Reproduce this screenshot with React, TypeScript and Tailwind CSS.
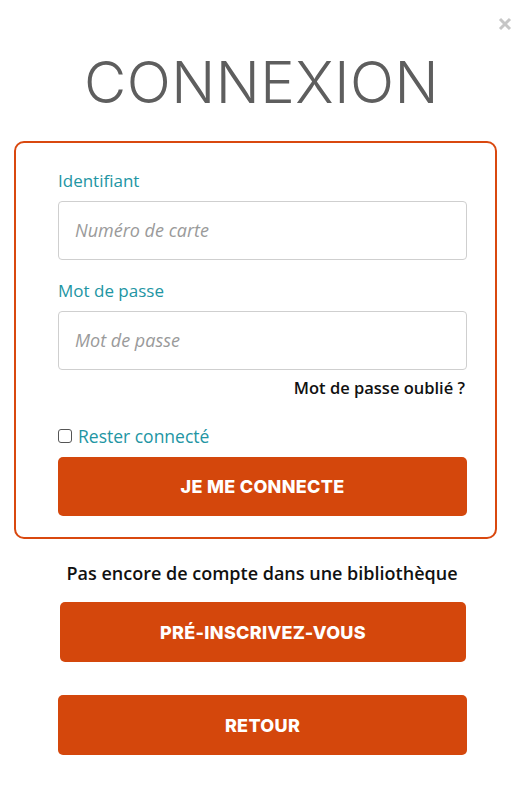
import React from "react";

export default function App() {
  return (
    <div className="relative w-[523px] h-[792px] bg-white overflow-hidden" style={{ fontFamily: '"Open Sans", "Liberation Sans", sans-serif' }}>
      <svg className="absolute left-[498px] top-[17px]" width="14" height="14" viewBox="0 0 14 14">
        <path d="M2 2 L12 12 M12 2 L2 12" stroke="#c6c6c6" strokeWidth="3" strokeLinecap="butt" />
      </svg>
      <h1 className="pt-[52px] h-[141px] text-center text-[58px] leading-[60px] text-[#5e5e5e] tracking-[0.5px]" style={{ fontFamily: 'Inter, "Open Sans", sans-serif', fontWeight: 300 }}>
        CONNEXION
      </h1>
      <div className="ml-[14px] w-[483px] h-[398px] border-2 border-[#d9480f] rounded-[10px] pl-[42px] pr-[28px] pt-[27px]">
        <label className="block text-[17px] leading-[22px] text-[#2295a3]">Identifiant</label>
        <div className="mt-[9px] h-[59px] border border-[#cfcfcf] rounded-[4px] flex items-center pl-[16px] text-[18px] italic text-[#9a9a9a]">Numéro de carte</div>
        <label className="block mt-[20px] text-[17px] leading-[22px] text-[#2295a3]">Mot de passe</label>
        <div className="mt-[9px] h-[59px] border border-[#cfcfcf] rounded-[4px] flex items-center pl-[16px] text-[18px] italic text-[#9a9a9a]">Mot de passe</div>
        <div className="mt-[7px] text-right pr-[2px] text-[16.5px] leading-[22px] font-semibold text-[#111]">Mot de passe oublié ?</div>
        <div className="mt-[26px] flex items-center gap-[6px]">
          <span className="inline-block w-[14px] h-[14px] border border-[#555] rounded-[3px] bg-white"></span>
          <span className="text-[17.5px] leading-[22px] text-[#2295a3]">Rester connecté</span>
        </div>
        <button className="mt-[10px] w-full h-[59px] rounded-[5px] bg-[#d4470c] text-white text-[18px] font-extrabold tracking-[0.3px]" style={{ fontFamily: 'Inter, "Open Sans", sans-serif' }}>JE ME CONNECTE</button>
      </div>
      <p className="mt-[23px] ml-[30px] w-[464px] text-center text-[18px] leading-[22px] font-semibold text-[#111]">Pas encore de compte dans une bibliothèque</p>
      <button className="block mt-[18px] ml-[60px] w-[406px] h-[60px] rounded-[5px] bg-[#d4470c] text-white text-[18px] font-extrabold tracking-[0.3px]" style={{ fontFamily: 'Inter, "Open Sans", sans-serif' }}>PRÉ-INSCRIVEZ-VOUS</button>
      <button className="block mt-[33px] ml-[58px] w-[409px] h-[60px] rounded-[5px] bg-[#d4470c] text-white text-[18px] font-extrabold tracking-[0.3px]" style={{ fontFamily: 'Inter, "Open Sans", sans-serif' }}>RETOUR</button>
    </div>
  );
}
